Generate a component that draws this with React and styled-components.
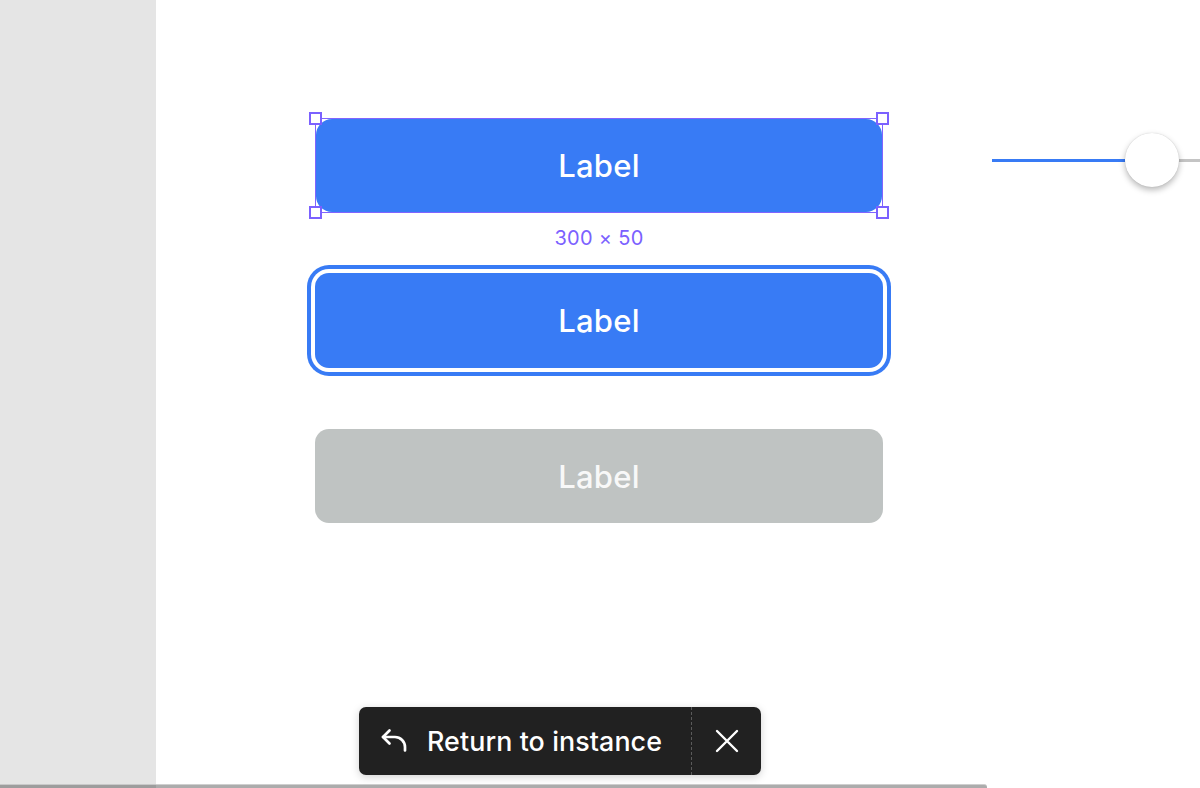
import React from "react";
import styled, { createGlobalStyle } from "styled-components";

const Global = createGlobalStyle`
  html, body { margin: 0; padding: 0; background: #ffffff; }
  body { font-family: Inter, "Noto Sans", sans-serif; -webkit-font-smoothing: antialiased; }
  * { box-sizing: border-box; }
`;

const Page = styled.div`
  width: 1200px;
  height: 788px;
  display: flex;
  flex-direction: column;
  overflow: hidden;
  position: relative;
`;

const Main = styled.div`
  flex: 1;
  display: flex;
  min-height: 0;
`;

const SidePanel = styled.aside`
  width: 156px;
  flex: none;
  background: #e5e5e5;
`;

const Canvas = styled.main`
  flex: 1;
  background: #ffffff;
  display: flex;
  align-items: flex-start;
  padding: 118px 0 0 159px;
  gap: 109px;
  overflow: hidden;
`;

const Column = styled.div`
  width: 568px;
  flex: none;
  display: flex;
  flex-direction: column;
  align-items: center;
`;

const Button = styled.div`
  width: ${(p) => (p.$inset ? 566 : 568)}px;
  height: ${(p) => (p.$inset ? 93 : p.$disabled ? 94 : 95)}px;
  margin-top: ${(p) => p.$mt || 0}px;
  border-radius: ${(p) => (p.$inset ? 16 : 14)}px;
  background: ${(p) => (p.$disabled ? "#bfc3c2" : "#387bf5")};
  color: ${(p) => (p.$disabled ? "#f8f8f8" : "#ffffff")};
  display: flex;
  align-items: center;
  justify-content: center;
  font-size: 31px;
  font-weight: 500;
  letter-spacing: 0.2px;
  box-shadow: ${(p) =>
    p.$focused ? "0 0 0 4px #ffffff, 0 0 0 8px #387bf5" : "none"};
`;

const Selected = styled.div`
  position: relative;
  width: 568px;
  height: 95px;
  display: flex;
  align-items: center;
  justify-content: center;
`;

const Frame = styled.div`
  position: absolute;
  inset: 0;
  border: 1px solid #8064ff;
  pointer-events: none;
`;

const Handle = styled.span`
  position: absolute;
  width: 13px;
  height: 13px;
  background: #ffffff;
  border: 2px solid #7b61ff;
  ${(p) => (p.$top ? "top: -7px;" : "bottom: -7px;")}
  ${(p) => (p.$left ? "left: -7px;" : "right: -7px;")}
`;

const Dimension = styled.div`
  margin-top: 12px;
  height: 26px;
  line-height: 26px;
  font-size: 20px;
  color: #7b61ff;
  letter-spacing: 0.3px;
`;

const Slider = styled.div`
  width: 260px;
  flex: none;
  height: 54px;
  margin-top: 15px;
  display: flex;
  align-items: center;
`;

const Track = styled.div`
  height: 3px;
  width: ${(p) => p.$w}px;
  background: ${(p) => p.$color};
  flex: none;
`;

const Knob = styled.div`
  width: 54px;
  height: 54px;
  border-radius: 50%;
  background: #ffffff;
  flex: none;
  box-shadow: 0 3px 6px rgba(0, 0, 0, 0.28), 0 0 1px rgba(0, 0, 0, 0.2);
  position: relative;
  z-index: 1;
`;

const ScrollBar = styled.div`
  height: 4px;
  flex: none;
  display: flex;
  background: #ffffff;
`;

const ScrollLeft = styled.div`
  width: 156px;
  background: #9d9d9d;
  border-top: 1px solid #c9c9c9;
`;

const ScrollThumb = styled.div`
  width: 831px;
  background: #acacac;
  border-top: 1px solid #cfcfcf;
  border-top-right-radius: 3px;
`;

const Toast = styled.div`
  position: absolute;
  left: 359px;
  top: 707px;
  width: 402px;
  height: 68px;
  background: #212121;
  border-radius: 7px;
  display: flex;
  align-items: stretch;
  box-shadow: 0 2px 8px rgba(0, 0, 0, 0.18);
  color: #ffffff;
`;

const ToastMain = styled.div`
  display: flex;
  align-items: center;
  padding-left: 22px;
  gap: 20px;
  width: 333px;
  font-size: 26.8px;
  font-weight: 500;
  letter-spacing: 0.1px;
  border-right: 1px dashed #5a5a5a;
`;

const ToastClose = styled.div`
  flex: 1;
  display: flex;
  align-items: center;
  justify-content: center;
`;

const UndoIcon = () => (
  <svg width="26" height="26" viewBox="0 0 26 26" fill="none" stroke="#fff"
    strokeWidth="2.7" strokeLinecap="round" strokeLinejoin="round">
    <path d="M8.5 2.5 2 9l6.5 6.5" />
    <path d="M2 9h12a10 10 0 0 1 10 10v3.5" />
  </svg>
);

const CloseIcon = () => (
  <svg width="24" height="24" viewBox="0 0 24 24" fill="none" stroke="#fff"
    strokeWidth="2.4" strokeLinecap="round">
    <path d="M2 2 22 22M22 2 2 22" />
  </svg>
);

export default function App() {
  return (
    <>
      <Global />
      <Page>
        <Main>
          <SidePanel />
          <Canvas>
            <Column>
              <Selected>
                <Button $inset>Label</Button>
                <Frame>
                  <Handle $top $left />
                  <Handle $top />
                  <Handle $left />
                  <Handle />
                </Frame>
              </Selected>
              <Dimension>300 × 50</Dimension>
              <Button $focused $mt={22}>Label</Button>
              <Button $disabled $mt={61}>Label</Button>
            </Column>
            <Slider>
              <Track $w={133} $color="#387bf5" />
              <Knob />
              <Track $w={73} $color="#c4c4c4" />
            </Slider>
          </Canvas>
        </Main>
        <ScrollBar>
          <ScrollLeft />
          <ScrollThumb />
        </ScrollBar>
        <Toast>
          <ToastMain>
            <UndoIcon />
            <span>Return to instance</span>
          </ToastMain>
          <ToastClose>
            <CloseIcon />
          </ToastClose>
        </Toast>
      </Page>
    </>
  );
}
